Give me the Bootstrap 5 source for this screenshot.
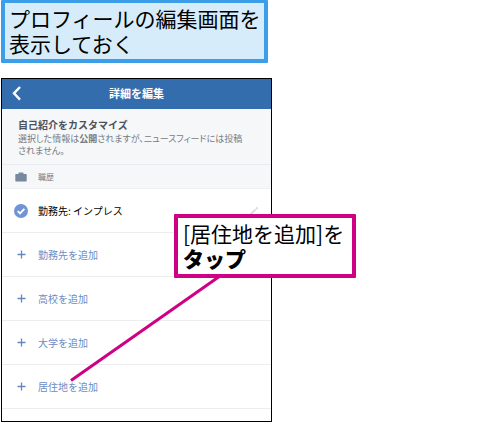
<!DOCTYPE html>
<html lang="ja">
<head>
<meta charset="utf-8">
<meta name="viewport" content="width=device-width, initial-scale=1">
<title>詳細を編集</title>
<link href="https://cdn.jsdelivr.net/npm/bootstrap@5.3.0/dist/css/bootstrap.min.css" rel="stylesheet">
<style>
body { font-family: "Noto Sans CJK JP", sans-serif; color: #000; background: #fff; font-size: 10px; }
.guide { padding-left: 1px; max-width: 273px; }
.step-note { background: #d6ecfa; border: 4px solid #3c9de8; border-top-width: 3px; border-radius: 1px; font-size: 21px; line-height: 25px; padding: 3px 0 3px 4px; margin-right: 5px; margin-bottom: 15px; }
.phone { border: 1px solid #000; margin-right: 1px; }
.top-bar { background: #336dae; color: #fff; height: 30px; }
.top-bar h1 { font-size: 11px; line-height: 28px; font-weight: 700; }
.back { left: 10px; top: 6px; line-height: 1; }
.intro { background: #f6f7f9; color: #747b84; padding: 8px 16px 7px; font-size: 9px; line-height: 12px; border-bottom: 1px solid #e8ecf0; }
.intro p { font-feature-settings: "palt"; }
.intro h2 { font-size: 10px; line-height: 16px; color: #4c525b; margin: 0; font-weight: 700; }
.section-head { background: #f6f7f9; color: #747b84; height: 24px; font-size: 8px; border-bottom: 1px solid #eef0f3; }
.entry { height: 44px; border-bottom: 1px solid #ebedef; font-size: 10px; line-height: 14px; }
.entry a { color: #6c8dc3; }
.glyph { width: 14px; margin-left: 12px; margin-right: 10px; }
.pencil { margin-right: 12px; }
.callout-box { left: 174px; top: 214px; width: 182px; background: #fff; border: 4px solid #ce0084; border-radius: 1px; font-size: 21px; line-height: 25px; padding: 3px 0 3px 5px; }
.callout-box strong { font-weight: 900; }
.pointer { left: 68px; top: 274px; }
.phone-end { height: 12px; }
</style>
<script src="https://cdn.jsdelivr.net/npm/bootstrap@5.3.0/dist/js/bootstrap.bundle.min.js"></script>
</head>
<body class="position-relative overflow-hidden">
<main class="guide">
  <div class="step-note">プロフィールの編集画面を<br>表示しておく</div>
  <section class="phone">
    <header class="top-bar position-relative text-center">
      <button type="button" class="back btn p-0 border-0 position-absolute d-flex" aria-label="戻る">
        <svg width="10" height="16" viewBox="0 0 10 16" fill="none" stroke="#fff" stroke-width="2.4"><path d="M8 2 2 8.300l6 6.300"/></svg>
      </button>
      <h1 class="m-0">詳細を編集</h1>
    </header>
    <div class="intro">
      <h2>自己紹介をカスタマイズ</h2>
      <p class="m-0">選択した情報は<span class="fw-bold">公開</span>されますが、ニュースフィードには投稿<br>されません。</p>
    </div>
    <div class="section-head d-flex align-items-center">
      <span class="glyph d-flex justify-content-center"><svg width="12" height="10" viewBox="0 0 12 10" fill="#78889f"><path d="M1 2h2.500V1Q3.500.4 4.100.4h3.800q.6 0 .6.600V2H11q.7 0 .7.700v6q0 .7-.7.700H1q-.7 0-.7-.7v-6Q.3 2 1 2"/></svg></span>
      <span>職歴</span>
    </div>
    <ul class="list-unstyled m-0">
      <li class="entry d-flex align-items-center">
        <span class="glyph d-flex"><svg width="14" height="14" viewBox="0 0 14 14"><circle cx="7" cy="7" r="7" fill="#7095d5"/><path d="m3.700 7.200 2.300 2.300 4.400-4.700" fill="none" stroke="#fff" stroke-width="1.900"/></svg></span>
        <span>勤務先: インプレス</span>
        <button type="button" class="pencil btn p-0 border-0 ms-auto d-flex" aria-label="編集"><svg width="10" height="10" viewBox="0 0 10 10" fill="none" stroke="#d9dadc"><path d="m1 9 5.500-5.500" stroke-width="1.800"/><path d="m7 3 1.500-1.500" stroke-width="2"/></svg></button>
      </li>
      <li class="entry d-flex align-items-center"><span class="glyph d-flex justify-content-center"><svg width="9" height="9" viewBox="0 0 9 9" stroke="#6686be" stroke-width="1.300"><path d="M.5 4.500h8M4.500.5v8"/></svg></span><a href="#work" class="text-decoration-none">勤務先を追加</a></li>
      <li class="entry d-flex align-items-center"><span class="glyph d-flex justify-content-center"><svg width="9" height="9" viewBox="0 0 9 9" stroke="#6686be" stroke-width="1.300"><path d="M.5 4.500h8M4.500.5v8"/></svg></span><a href="#school" class="text-decoration-none">高校を追加</a></li>
      <li class="entry d-flex align-items-center"><span class="glyph d-flex justify-content-center"><svg width="9" height="9" viewBox="0 0 9 9" stroke="#6686be" stroke-width="1.300"><path d="M.5 4.500h8M4.500.5v8"/></svg></span><a href="#college" class="text-decoration-none">大学を追加</a></li>
      <li class="entry d-flex align-items-center"><span class="glyph d-flex justify-content-center"><svg width="9" height="9" viewBox="0 0 9 9" stroke="#6686be" stroke-width="1.300"><path d="M.5 4.500h8M4.500.5v8"/></svg></span><a href="#home" class="text-decoration-none">居住地を追加</a></li>
    </ul>
    <div class="phone-end"></div>
  </section>
</main>
<svg class="pointer position-absolute pe-none" width="156" height="110" viewBox="0 0 156 110" aria-hidden="true"><path d="M3 106.500 152 2" stroke="#ce0084" stroke-width="3"/></svg>
<div class="callout-box position-absolute text-nowrap">[居住地を追加]を<br><strong>タップ</strong></div>
</body>
</html>
